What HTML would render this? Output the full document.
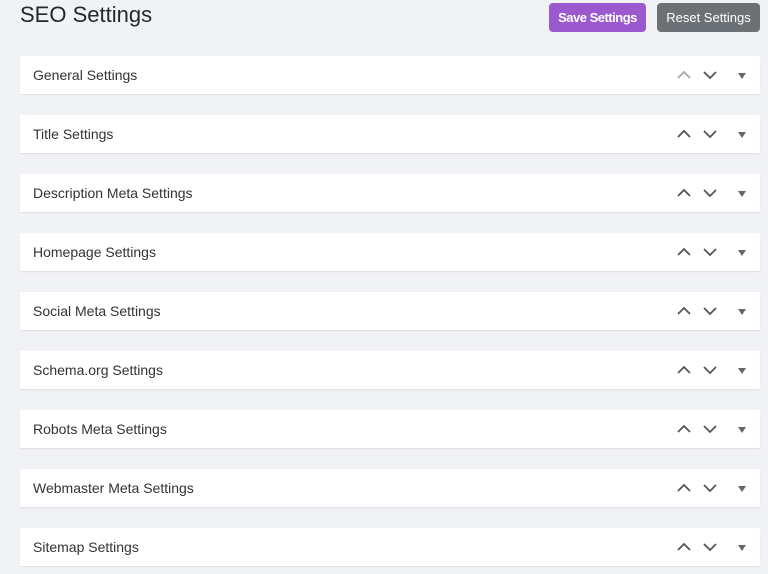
<!DOCTYPE html>
<html><head><style>
body{margin:0;background:#f1f2f6;font-family:"Liberation Sans",sans-serif;width:768px;height:574px;overflow:hidden;position:relative}
h1{position:absolute;left:20px;top:0;margin:0;font-weight:400;font-size:22px;color:#23282d;line-height:30px}
.btn{position:absolute;top:3px;height:29px;border-radius:4px;color:#fff;font-size:13px;line-height:29px;text-align:center}
.panel{position:absolute;left:20px;width:740px;height:38px;background:#fff;box-shadow:0 1px 1px rgba(0,0,0,.08)}
.panel span{position:absolute;left:13px;top:11px;font-size:14px;color:#333}
.panel svg{position:absolute;top:12px}
</style></head><body>
<h1>SEO Settings</h1>
<div class="btn" style="left:549px;width:97px;background:#9b59d0;font-weight:bold;letter-spacing:-0.5px">Save Settings</div>
<div class="btn" style="left:657px;width:103px;background:#6b7174">Reset Settings</div>
<div id="c"></div>
<script>
var n=["General Settings","Title Settings","Description Meta Settings","Homepage Settings","Social Meta Settings","Schema.org Settings","Robots Meta Settings","Webmaster Meta Settings","Sitemap Settings"];
var h="";
n.forEach(function(t,i){var y=56+i*59;var uc=i==0?"#a8a8a8":"#555";
h+='<div class="panel" style="top:'+y+'px"><span>'+t+'</span>'+
'<svg style="left:657px" width="14" height="14"><path d="M1 10 L7 4 L13 10" fill="none" stroke="'+uc+'" stroke-width="1.8"/></svg>'+
'<svg style="left:683px" width="14" height="14"><path d="M1 4 L7 10 L13 4" fill="none" stroke="#555" stroke-width="1.8"/></svg>'+
'<svg style="left:717px" width="10" height="14"><path d="M1 5 L9 5 L5 11Z" fill="#666"/></svg></div>';});
document.getElementById("c").innerHTML=h;
</script>
</body></html>
